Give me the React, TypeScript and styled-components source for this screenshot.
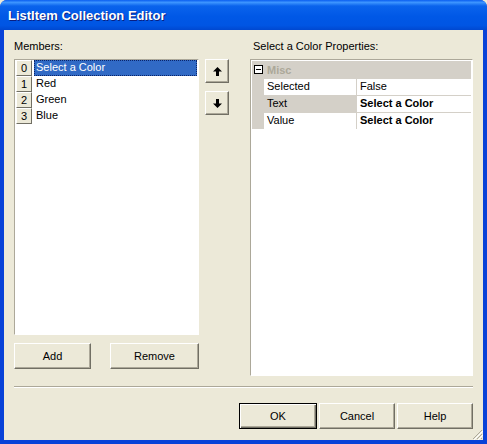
import React from "react";
import styled, { createGlobalStyle } from "styled-components";

const GlobalStyle = createGlobalStyle`
  html, body { margin: 0; padding: 0; background: #ece9d8; }
  body { font-family: Tahoma, "Liberation Sans", Arial, sans-serif; font-size: 11px; color: #000; }
`;

const Window = styled.div`
  width: 487px;
  height: 444px;
  display: flex;
  flex-direction: column;
  background: #0842d8;
  border-radius: 7px 7px 0 0;
  overflow: hidden;
`;

const TitleBar = styled.div`
  height: 30px;
  flex: none;
  display: flex;
  align-items: center;
  padding-left: 8px;
  background: linear-gradient(to bottom, #0a5ef0 0%, #3d95ff 8%, #0a63ec 20%, #0058e6 55%, #0055e3 85%, #0048d0 100%);
  color: #fff;
  font-family: "Trebuchet MS", "Liberation Sans", Arial, sans-serif;
  font-weight: bold;
  font-size: 13px;
  text-shadow: 1px 1px 0 #0a1f80;
`;

const Client = styled.div`
  flex: 1;
  margin: 0 4px 4px 4px;
  background: #ece9d8;
  display: flex;
  flex-direction: column;
  padding: 10px 10px 0 10px;
  position: relative;
`;

const TopArea = styled.div`
  display: flex;
  gap: 21px;
`;

const LeftColumn = styled.div`
  width: 215px;
  display: flex;
  flex-direction: column;
`;

const RightColumn = styled.div`
  width: 223px;
  display: flex;
  flex-direction: column;
`;

const Label = styled.div<{ indent?: number }>`
  height: 18px;
  line-height: 11px;
  padding-left: ${(p) => p.indent ?? 0}px;
  margin-top: 1px;
`;

const ListRow = styled.div`
  display: flex;
  gap: 6px;
`;

const Sunken = styled.div`
  box-sizing: border-box;
  border-top: 1px solid #aca899;
  border-left: 1px solid #aca899;
  border-right: 1px solid #fff;
  border-bottom: 1px solid #fff;
  background: #fff;
`;

const ListBox = styled(Sunken)`
  width: 186px;
  height: 276px;
  padding: 0 1px;
`;

const Item = styled.div`
  display: flex;
  height: 16px;
`;

const IndexCell = styled.div`
  width: 16px;
  height: 16px;
  box-sizing: border-box;
  background: #ece9d8;
  border-top: 1px solid #fff;
  border-left: 1px solid #fff;
  border-right: 1px solid #716f64;
  border-bottom: 1px solid #716f64;
  text-align: center;
  line-height: 14px;
  flex: none;
`;

const ItemText = styled.div<{ selected?: boolean }>`
  flex: 1;
  margin-left: 2px;
  padding-left: 2px;
  line-height: 15px;
  box-sizing: border-box;
  background: ${(p) => (p.selected ? "#316ac5" : "transparent")};
  color: ${(p) => (p.selected ? "#fff" : "#000")};
  outline: ${(p) => (p.selected ? "1px dotted #0a246a" : "none")};
  outline-offset: -1px;
`;

const ArrowColumn = styled.div`
  display: flex;
  flex-direction: column;
  gap: 8px;
`;

const Raised = styled.button`
  box-sizing: border-box;
  background: #ece9d8;
  border-top: 1px solid #fff;
  border-left: 1px solid #fff;
  border-right: 1px solid #716f64;
  border-bottom: 1px solid #716f64;
  box-shadow: inset -1px -1px 0 #aca899;
  font-family: inherit;
  font-size: 11px;
  color: #000;
  padding: 0;
  display: flex;
  align-items: center;
  justify-content: center;
`;

const ArrowButton = styled(Raised)`
  width: 24px;
  height: 24px;
`;

const ButtonRow = styled.div`
  display: flex;
  gap: 19px;
  margin-top: 8px;
`;

const PushButton = styled(Raised)<{ w: number; primary?: boolean }>`
  width: ${(p) => p.w}px;
  height: 26px;
  ${(p) =>
    p.primary
      ? `border: 1px solid #000; box-shadow: inset 1px 1px 0 #fff, inset -1px -1px 0 #716f64, inset -2px -2px 0 #aca899;`
      : ""}
`;

const Grid = styled(Sunken)`
  height: 317px;
  padding: 1px;
`;

const CategoryRow = styled.div`
  display: flex;
  align-items: center;
  height: 17px;
  background: #d4d0c8;
`;

const Expander = styled.div`
  width: 9px;
  height: 9px;
  box-sizing: border-box;
  border: 1px solid #000;
  margin: 0 4px 0 2px;
  position: relative;
  background: #fff;
  &::after {
    content: "";
    position: absolute;
    left: 1px;
    top: 3px;
    width: 5px;
    height: 1px;
    background: #000;
  }
`;

const CategoryName = styled.span`
  font-weight: bold;
  color: #aca899;
`;

const PropRow = styled.div`
  display: flex;
  height: 16px;
  border-top: 1px solid #d4d0c8;
`;

const Margin = styled.div`
  width: 12px;
  background: #d4d0c8;
  flex: none;
`;

const NameCell = styled.div<{ active?: boolean }>`
  width: 89px;
  flex: none;
  padding-left: 3px;
  line-height: 15px;
  background: ${(p) => (p.active ? "#d4d0c8" : "#fff")};
  border-right: 1px solid #d4d0c8;
`;

const ValueCell = styled.div<{ bold?: boolean }>`
  flex: 1;
  padding-left: 3px;
  line-height: 15px;
  font-weight: ${(p) => (p.bold ? "bold" : "normal")};
`;

const Separator = styled.div`
  margin-top: 10px;
  height: 1px;
  background: #aca899;
  border-bottom: 1px solid #fff;
`;

const Footer = styled.div`
  display: flex;
  justify-content: flex-end;
  gap: 2px;
  margin-top: 15px;
`;

const Grip = styled.svg`
  position: absolute;
  right: 0;
  bottom: 0;
`;

const Arrow = ({ down }: { down?: boolean }) => (
  <svg width="9" height="9" viewBox="0 0 9 9" style={{ transform: down ? "rotate(180deg)" : undefined }}>
    <path d="M4.5 0 L9 4.5 L6 4.5 L6 9 L3 9 L3 4.5 L0 4.5 Z" fill="#000" />
  </svg>
);

const items = ["Select a Color", "Red", "Green", "Blue"];

const props = [
  { name: "Selected", value: "False", bold: false },
  { name: "Text", value: "Select a Color", bold: true, active: true },
  { name: "Value", value: "Select a Color", bold: true },
];

export default function App() {
  return (
    <>
      <GlobalStyle />
      <Window>
        <TitleBar>ListItem Collection Editor</TitleBar>
        <Client>
          <TopArea>
            <LeftColumn>
              <Label>Members:</Label>
              <ListRow>
                <ListBox>
                  {items.map((t, i) => (
                    <Item key={t}>
                      <IndexCell>{i}</IndexCell>
                      <ItemText selected={i === 0}>{t}</ItemText>
                    </Item>
                  ))}
                </ListBox>
                <ArrowColumn>
                  <ArrowButton>
                    <Arrow />
                  </ArrowButton>
                  <ArrowButton>
                    <Arrow down />
                  </ArrowButton>
                </ArrowColumn>
              </ListRow>
              <ButtonRow>
                <PushButton w={77}>Add</PushButton>
                <PushButton w={89}>Remove</PushButton>
              </ButtonRow>
            </LeftColumn>
            <RightColumn>
              <Label indent={3}>Select a Color Properties:</Label>
              <Grid>
                <CategoryRow>
                  <Expander />
                  <CategoryName>Misc</CategoryName>
                </CategoryRow>
                {props.map((p) => (
                  <PropRow key={p.name}>
                    <Margin />
                    <NameCell active={p.active}>{p.name}</NameCell>
                    <ValueCell bold={p.bold}>{p.value}</ValueCell>
                  </PropRow>
                ))}
              </Grid>
            </RightColumn>
          </TopArea>
          <Separator />
          <Footer>
            <PushButton w={78} primary>
              OK
            </PushButton>
            <PushButton w={76}>Cancel</PushButton>
            <PushButton w={76}>Help</PushButton>
          </Footer>
          <Grip width="12" height="12" viewBox="0 0 12 12">
            <path d="M11 2 L2 11 M11 6 L6 11 M11 10 L10 11" stroke="#aca899" strokeWidth="1" />
            <path d="M12 3 L3 12 M12 7 L7 12" stroke="#fff" strokeWidth="1" />
          </Grip>
        </Client>
      </Window>
    </>
  );
}
